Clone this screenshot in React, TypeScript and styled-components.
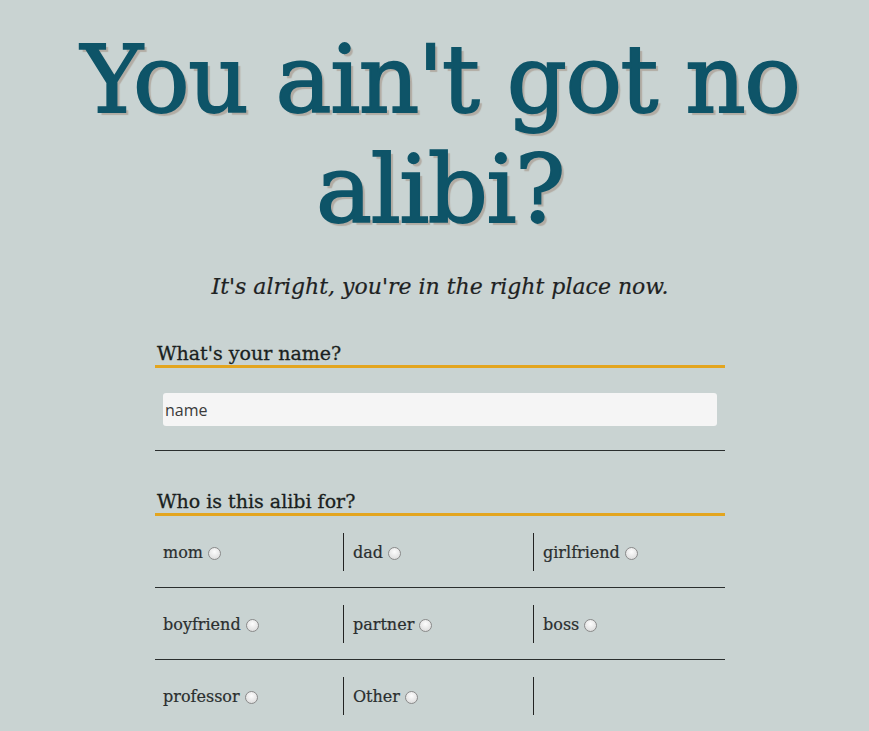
import React from "react";
import styled, { createGlobalStyle } from "styled-components";

const Global = createGlobalStyle`
  html, body { margin: 0; padding: 0; background: #c9d3d2; }
  body { font-family: "DejaVu Serif", serif; color: #222; }
`;

const Page = styled.div`
  display: flex;
  flex-direction: column;
  align-items: center;
  padding: 25px 0 0 11px;
`;

const Title = styled.h1`
  margin: 0;
  font-family: "DejaVu Serif", serif;
  font-weight: normal;
  font-size: 94px;
  line-height: 110px;
  color: #0e5468;
  text-align: center;
  text-shadow: 3px 3px 1px #b2aca4;
  letter-spacing: -1.5px;
  -webkit-text-stroke: 1.8px #0e5468;
  white-space: nowrap;
`;

const Subtitle = styled.p`
  margin: 29px 0 0;
  font-style: italic;
  font-size: 22px;
  line-height: 26px;
  color: #1e2222;
  -webkit-text-stroke: 0.2px #1e2222;
`;

const Form = styled.form`
  width: 570px;
  margin-top: 41px;
`;

const Legend = styled.div`
  font-size: 19px;
  line-height: 24px;
  padding-left: 2px;
  border-bottom: 3px solid #e3a51f;
  color: #1a1f20;
  -webkit-text-stroke: 0.3px #1a1f20;
`;

const InputWrap = styled.div`
  padding: 25px 8px 24px;
  border-bottom: 1px solid #2a2e2e;
`;

const NameInput = styled.input`
  display: block;
  width: 100%;
  box-sizing: border-box;
  height: 33px;
  border: none;
  border-radius: 3px;
  background: #f5f5f5;
  padding: 0 2px;
  font-family: "Open Sans", sans-serif;
  font-size: 16px;
  color: #3a3a3a;
  outline: none;
  &::placeholder { color: #3a3a3a; }
`;

const Section = styled.div`
  margin-top: 38px;
`;

const Grid = styled.div`
  display: grid;
  grid-template-columns: repeat(3, 1fr);
`;

const Cell = styled.label<{ $lastRow: boolean }>`
  display: flex;
  align-items: stretch;
  padding: 17px 0 16px;
  border-bottom: ${(p) => (p.$lastRow ? "none" : "1px solid #2a2e2e")};
`;

const CellInner = styled.span<{ $first: boolean }>`
  display: flex;
  align-items: center;
  height: 38px;
  margin-left: ${(p) => (p.$first ? "0" : "-2px")};
  padding-left: ${(p) => (p.$first ? "8px" : "9px")};
  border-left: ${(p) => (p.$first ? "none" : "1px solid #222")};
  font-size: 16px;
  color: #2a2e2e;
  -webkit-text-stroke: 0.2px #2a2e2e;
`;

const Radio = styled.span`
  display: inline-block;
  width: 13px;
  height: 13px;
  margin-left: 5px;
  margin-top: 3px;
  border-radius: 50%;
  border: 1px solid #8a8a8a;
  background: radial-gradient(circle at 50% 35%, #fdfdfd, #d6d6d6);
  box-sizing: border-box;
`;

const options = [
  "mom", "dad", "girlfriend",
  "boyfriend", "partner", "boss",
  "professor", "Other", "",
];

export default function App() {
  return (
    <>
      <Global />
      <Page>
        <Title>
          You ain't got no
          <br />
          alibi?
        </Title>
        <Subtitle>It's alright, you're in the right place now.</Subtitle>
        <Form>
          <Legend>What's your name?</Legend>
          <InputWrap>
            <NameInput placeholder="name" />
          </InputWrap>
          <Section>
            <Legend>Who is this alibi for?</Legend>
            <Grid>
              {options.map((o, i) => (
                <Cell key={i} $lastRow={i >= 6}>
                  <CellInner $first={i % 3 === 0}>
                    {o}
                    {o && <Radio />}
                  </CellInner>
                </Cell>
              ))}
            </Grid>
          </Section>
        </Form>
      </Page>
    </>
  );
}
